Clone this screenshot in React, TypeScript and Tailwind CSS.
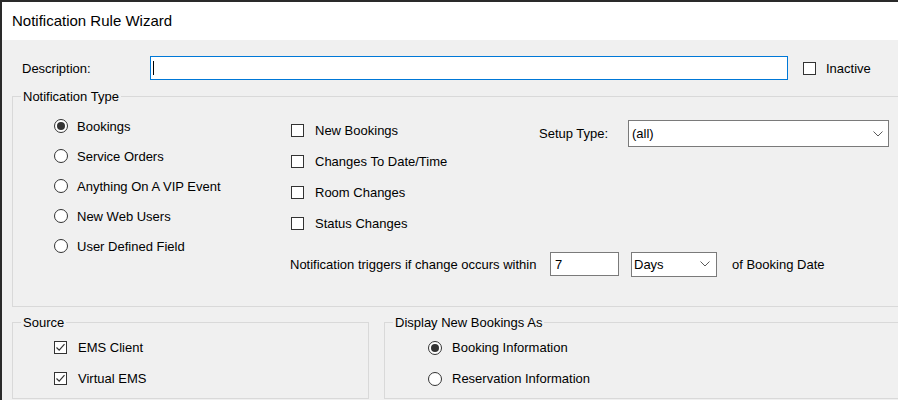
import React from "react";

function Radio({ checked }: { checked?: boolean }) {
  return (
    <span className="w-[14px] h-[14px] rounded-full border border-[#333333] bg-white flex items-center justify-center shrink-0">
      {checked && <span className="w-[8px] h-[8px] rounded-full bg-[#333333]" />}
    </span>
  );
}

function Check({ checked }: { checked?: boolean }) {
  return (
    <span className="w-[13px] h-[13px] border border-[#333333] bg-white flex items-center justify-center shrink-0">
      {checked && (
        <svg width="11" height="11" viewBox="0 0 11 11">
          <polyline points="1.5,5.5 4.2,8.2 9.5,2.2" fill="none" stroke="#333333" strokeWidth="1.2" />
        </svg>
      )}
    </span>
  );
}

function Chevron() {
  return (
    <svg width="10" height="6" viewBox="0 0 10 6" className="shrink-0">
      <polyline points="0.5,0.5 5,5 9.5,0.5" fill="none" stroke="#5a5a5a" strokeWidth="1" />
    </svg>
  );
}

function RadioRow({ label, checked }: { label: string; checked?: boolean }) {
  return (
    <div className="h-[30px] flex items-center">
      <Radio checked={checked} />
      <span className="ml-[9px]">{label}</span>
    </div>
  );
}

function CheckRow({ label, checked }: { label: string; checked?: boolean }) {
  return (
    <div className="h-[31px] flex items-center">
      <Check checked={checked} />
      <span className="ml-[11px]">{label}</span>
    </div>
  );
}

export default function App() {
  return (
    <div className="w-[898px] h-[400px] overflow-hidden bg-[#f0f0f0] border-l-2 border-t-2 border-[#2a2a2a] text-[13px] leading-[15px] text-black font-['Liberation_Sans',Arial,sans-serif]">
      <div className="h-[38px] bg-white flex items-center pl-[10px] text-[15px] leading-[18px]">
        Notification Rule Wizard
      </div>

      <div className="mt-[16px] h-[24px] flex items-center pl-[20px]">
        <span className="w-[128px] shrink-0">Description:</span>
        <div className="w-[638px] h-[24px] bg-white border border-[#0078d7] flex items-center pl-[2px] shrink-0">
          <span className="w-[1px] h-[14px] bg-black" />
        </div>
        <div className="ml-[15px] flex items-center">
          <Check />
          <span className="ml-[10px]">Inactive</span>
        </div>
      </div>

      <fieldset className="mt-[9px] ml-[10px] w-[900px] h-[218px] border border-[#d9d9d9]">
        <legend className="ml-[8px] px-[2px] leading-[15px]">Notification Type</legend>
        <div className="flex pl-[41px]">
          <div className="w-[237px] shrink-0 pt-[7px]">
            <RadioRow label="Bookings" checked />
            <RadioRow label="Service Orders" />
            <RadioRow label="Anything On A VIP Event" />
            <RadioRow label="New Web Users" />
            <RadioRow label="User Defined Field" />
          </div>
          <div className="pt-[11px]">
            <div className="flex items-start">
              <div className="w-[248px] shrink-0">
                <CheckRow label="New Bookings" />
                <CheckRow label="Changes To Date/Time" />
                <CheckRow label="Room Changes" />
                <CheckRow label="Status Changes" />
              </div>
              <div className="mt-[5px] flex items-center">
                <span className="w-[89px] shrink-0">Setup Type:</span>
                <div className="w-[261px] h-[27px] bg-white border border-[#7a7a7a] flex items-center justify-between pl-[3px] pr-[5px]">
                  <span>(all)</span>
                  <Chevron />
                </div>
              </div>
            </div>
            <div className="mt-[13px] -ml-[1px] h-[24px] flex items-center">
              <span className="w-[260px] shrink-0">Notification triggers if change occurs within</span>
              <div className="w-[69px] h-[24px] bg-white border border-[#7a7a7a] flex items-center pl-[4px] shrink-0">
                7
              </div>
              <div className="ml-[12px] w-[86px] h-[25px] bg-white border border-[#7a7a7a] flex items-center justify-between pl-[2px] pr-[6px] shrink-0">
                <span>Days</span>
                <Chevron />
              </div>
              <span className="ml-[15px]">of Booking Date</span>
            </div>
          </div>
        </div>
      </fieldset>

      <div className="mt-[8px] ml-[10px] flex gap-[15px]">
        <fieldset className="w-[357px] h-[84px] shrink-0 border border-[#d9d9d9]">
          <legend className="ml-[8px] px-[2px] leading-[15px]">Source</legend>
          <div className="pl-[41px] pt-[2px]">
            <CheckRow label="EMS Client" checked />
            <CheckRow label="Virtual EMS" checked />
          </div>
        </fieldset>
        <fieldset className="w-[530px] h-[84px] shrink-0 border border-[#d9d9d9]">
          <legend className="ml-[8px] px-[2px] leading-[15px]">Display New Bookings As</legend>
          <div className="pl-[43px] pt-[2px]">
            <div className="h-[31px] flex items-center">
              <Radio checked />
              <span className="ml-[10px]">Booking Information</span>
            </div>
            <div className="h-[31px] flex items-center">
              <Radio />
              <span className="ml-[10px]">Reservation Information</span>
            </div>
          </div>
        </fieldset>
      </div>
    </div>
  );
}
